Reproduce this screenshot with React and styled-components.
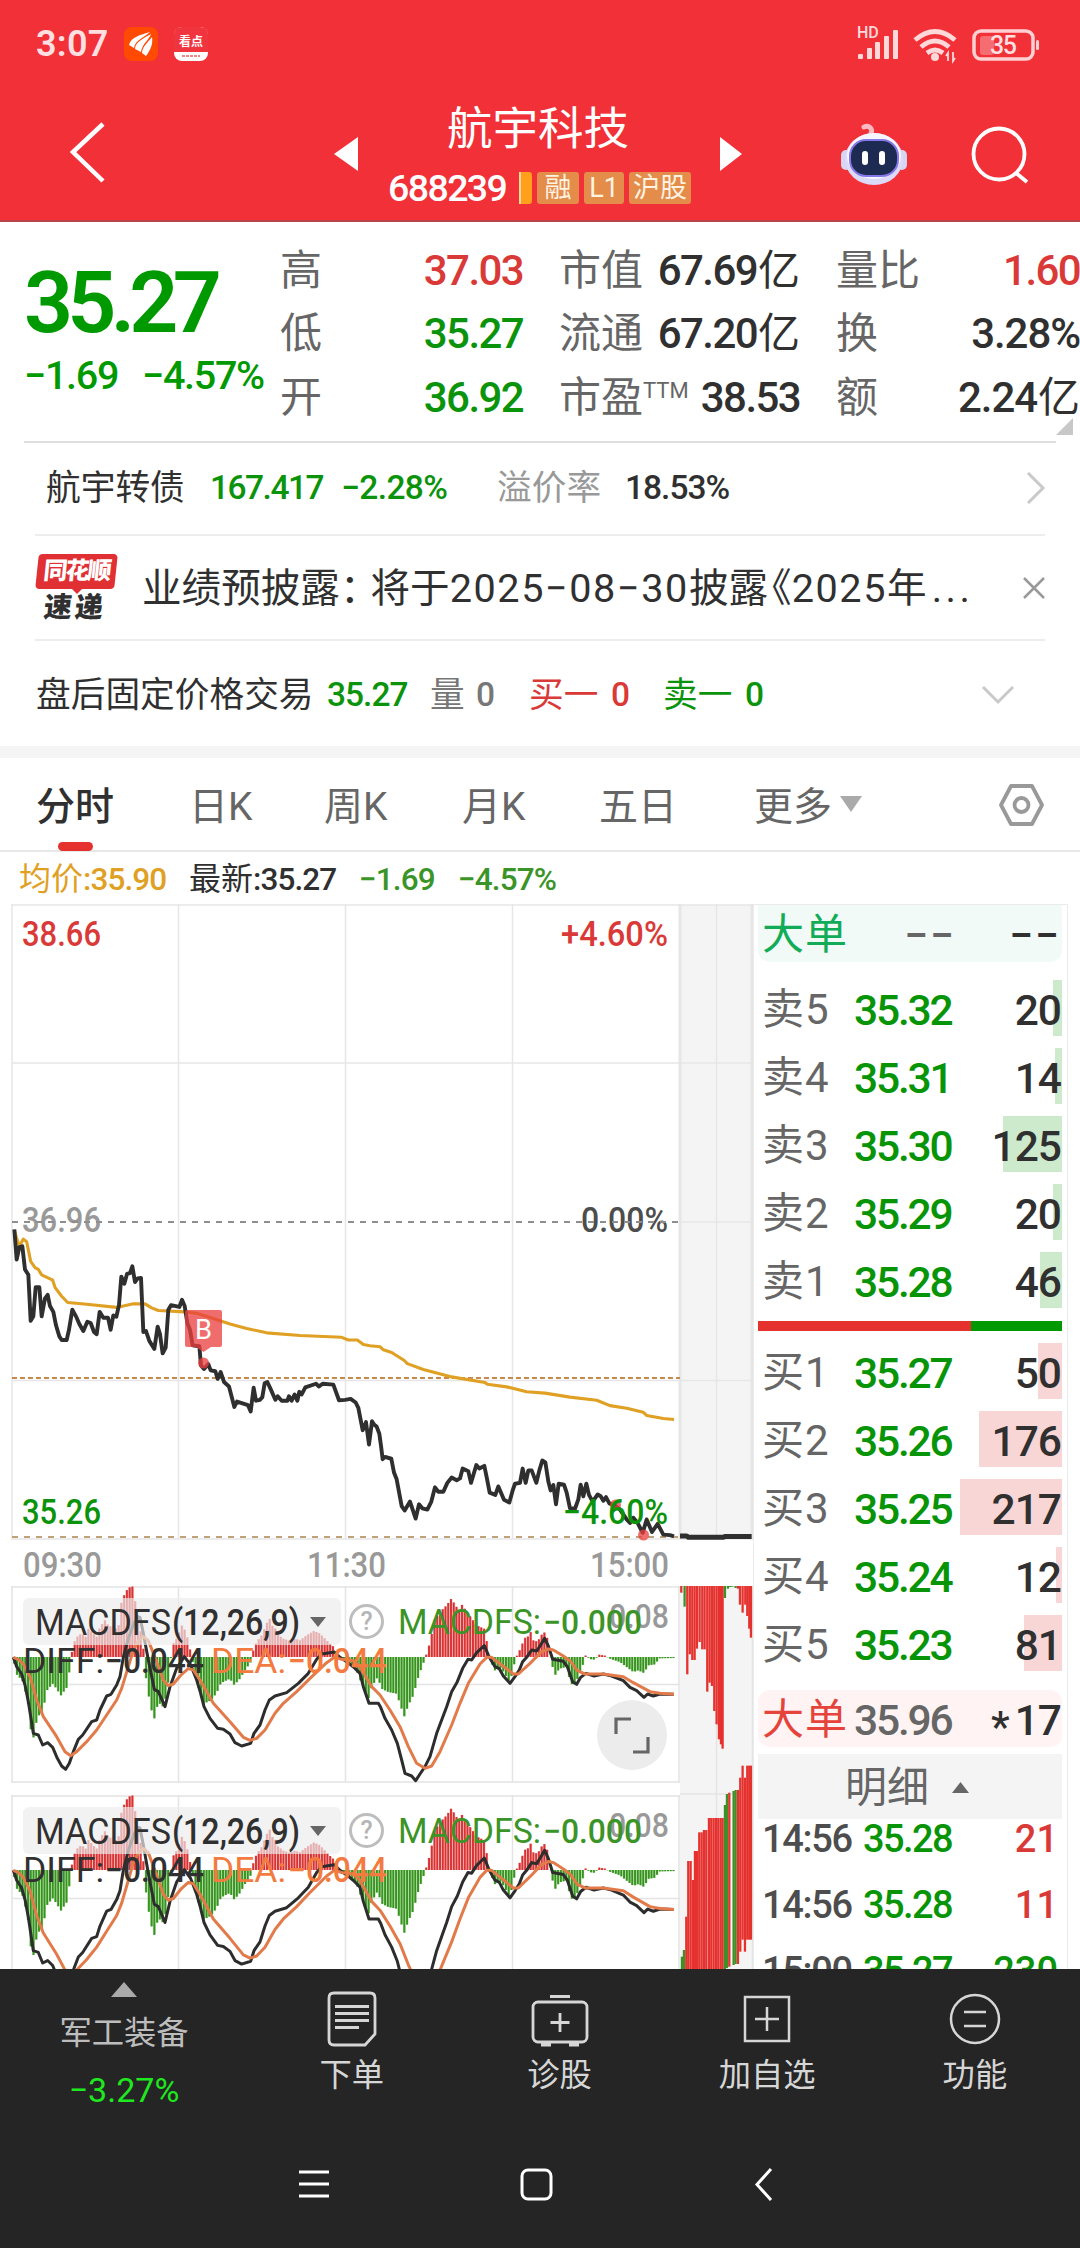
import React from "react";
import styled, { createGlobalStyle, css } from "styled-components";

const RED = "#d93a38";
const GREEN = "#0b930b";
const INK = "#303030";
const GRAY = "#666";
const LIGHT = "#999";

const GlobalStyle = createGlobalStyle`
	* { box-sizing: border-box; }
	body {
		margin: 0;
		background: #fff;
		color: ${INK};
		font-family: Roboto, "Noto Sans CJK SC", sans-serif;
		font-weight: 400;
		line-height: 1.2;
		-webkit-font-smoothing: antialiased;
	}
	svg { display: block; flex: none; }
	svg text { font-family: Roboto, "Noto Sans CJK SC", sans-serif; }
`;

const Screen = styled.div`
	width: 1080px;
	height: 2248px;
	display: flex;
	flex-direction: column;
	overflow: hidden;
	white-space: nowrap;
`;

/* ---------- header ---------- */

const Header = styled.header`
	height: 222px;
	background: #f13038;
	border-bottom: 2px solid #b8444c;
	color: #fff;
`;

const StatusBar = styled.div`
	height: 88px;
	padding: 0 39px 1px 36px;
	display: flex;
	align-items: center;
`;

const Clock = styled.span`
	width: 87px;
	padding-top: 3px;
	font-size: 36px;
	font-weight: 600;
	letter-spacing: 0.3px;
	color: #ffdfe0;
`;

const StatusIcons = styled.div`
	margin-left: auto;
	display: flex;
	align-items: center;
`;

const NavBar = styled.div`
	height: 132px;
	display: flex;
	align-items: center;
`;

const NavLeft = styled.div`
	width: 358px;
	padding-left: 66px;
	display: flex;
	justify-content: space-between;
	align-items: center;
`;

const NavTitle = styled.div`
	width: 362px;
	height: 132px;
	padding-top: 14px;
	display: flex;
	flex-direction: column;
	align-items: center;
`;

const StockName = styled.div`
	height: 58px;
	line-height: 56px;
	font-size: 45.5px;
	padding-right: 2px;
`;

const CodeLine = styled.div`
	display: flex;
	align-items: center;
	width: 302px;
	height: 56px;
`;

const Code = styled.span`
	width: 131px;
	flex: none;
	font-size: 37.5px;
	font-weight: 500;
	letter-spacing: -1.6px;
`;

const Tag = styled.span`
	height: 32px;
	width: ${p => p.$w}px;
	margin-right: 5px;
	flex: none;
	border-radius: 3px;
	background: #e48c4a;
	color: #fff3e2;
	font-size: 27px;
	line-height: 32px;
	text-align: center;
`;

const TagSliver = styled.span`
	height: 32px;
	width: 13px;
	margin-right: 5px;
	flex: none;
	border-radius: 0 3px 3px 0;
	background: linear-gradient(90deg, #ffd9a0 0 2px, #ff9f1c 2px);
`;

const NavRight = styled.div`
	display: flex;
	align-items: center;
	width: 359px;
`;

/* ---------- quote block ---------- */

const Quote = styled.section`
	height: 219px;
	display: flex;
	position: relative;
`;

const PriceBlock = styled.div`
	width: 280px;
	padding: 31px 0 0 24px;
	color: #009a00;
`;

const BigPrice = styled.div`
	height: 98px;
	line-height: 100px;
	font-size: 86px;
	font-weight: 600;
	letter-spacing: -5.8px;
`;

const Change = styled.div`
	height: 50px;
	line-height: 50px;
	font-size: 39.5px;
	font-weight: 500;
	letter-spacing: -1.3px;
	display: flex;
	span:first-child { width: 118px; }
`;

const StatColumn = styled.div`
	width: ${p => p.$w}px;
	margin-right: ${p => p.$gap}px;
	padding-top: 17px;
`;

const Stat = styled.div`
	height: 63.5px;
	display: flex;
	justify-content: space-between;
	align-items: center;
	font-size: 42px;
	color: ${GRAY};
	sup { font-size: 22px; line-height: 0; vertical-align: 14px; }
`;

const StatValue = styled.span`
	font-weight: 500;
	letter-spacing: ${p => (p.$tight ? -1.1 : -1.6)}px;
	color: ${p => p.$color || INK};
	i { font-style: normal; font-weight: 400; letter-spacing: 0; margin-left: 1px; }
`;

const Corner = styled.div`
	position: absolute;
	right: 7px;
	bottom: 6px;
	border-left: 17px solid transparent;
	border-bottom: 17px solid #c8c8c8;
`;

const Rule = styled.div`
	height: 2px;
	margin: 0 ${p => p.$m}px;
	background: ${p => p.$color || "#ededed"};
	flex: none;
`;

const InfoRow = styled.div`
	height: ${p => p.$h}px;
	padding: ${p => p.$pt || 0}px 34px 0 ${p => p.$pl}px;
	display: flex;
	align-items: center;
	font-size: 34.7px;
`;

const InfoCell = styled.span`
	width: ${p => p.$w}px;
	color: ${p => p.$color || INK};
	${p =>
		p.$num &&
		css`
			font-size: 33.5px;
			font-weight: 500;
			letter-spacing: ${p.$ls || -1}px;
		`}
`;

const NewsLogo = styled.div`
	position: relative;
	width: 106px;
	height: 76px;
	padding-top: 4px;
	font-weight: 900;
	font-size: 24px;
	div {
		width: 79px;
		height: 35px;
		line-height: 35px;
		margin-left: 1px;
		border-radius: 4px;
		background: #e03034;
		color: #fff;
		text-align: center;
		letter-spacing: -2px;
		transform: skewX(-6deg);
	}
	&::after {
		content: "";
		position: absolute;
		left: 35px;
		top: 38px;
		border: 6px solid transparent;
		border-top-color: #e03034;
	}
	p {
		margin: 2px 0 0 8px;
		line-height: 34px;
		font-size: 28px;
		letter-spacing: 3px;
		transform: skewX(-6deg);
	}
`;

const NewsText = styled.span`
	width: 874px;
	padding-top: 3px;
	font-size: 39.6px;
	b { font-weight: 400; letter-spacing: 1.6px; }
`;

/* full-width punctuation set to roughly half its advance */
const Colon = styled.span`
	letter-spacing: -9px;
`;

const OpenQuote = styled.span`
	margin-left: -16px;
`;

const Dots = styled.span`
	margin-left: 5px;
	letter-spacing: 3.5px;
`;

const Push = styled.span`
	margin-left: auto;
	margin-right: ${p => p.$mr || 0}px;
`;

const Band = styled.div`
	height: 12px;
	background: #f4f4f4;
	flex: none;
`;

/* ---------- tabs ---------- */

const Tabs = styled.nav`
	height: 94px;
	padding: 0 36px;
	display: flex;
	align-items: center;
	border-bottom: 2px solid #e8e8e8;
`;

const Tab = styled.div`
	position: relative;
	width: ${p => p.$w}px;
	font-size: 39px;
	line-height: 98px;
	height: 92px;
	color: ${p => (p.$active ? INK : GRAY)};
	font-weight: ${p => (p.$active ? 500 : 400)};
	${p =>
		p.$active &&
		css`
			&::after {
				content: "";
				position: absolute;
				left: 22px;
				bottom: -1px;
				width: 35px;
				height: 9px;
				border-radius: 5px;
				background: #e5322f;
			}
		`}
`;

const Legend = styled.div`
	height: 52px;
	padding: 3px 0 0 19px;
	display: flex;
	align-items: center;
	font-size: 32px;
`;

const LegendItem = styled.span`
	width: ${p => p.$w}px;
	color: ${p => p.$color || INK};
	b { font-weight: 500; font-size: 31.5px; letter-spacing: -0.9px; }
`;

/* ---------- body ---------- */

const Body = styled.main`
	height: 1065px;
	display: flex;
	overflow: hidden;
`;

const Charts = styled.div`
	width: 753px;
	flex: none;
`;

const Panel = styled.div`
	position: relative;
	height: ${p => p.$h}px;
	overflow: hidden;
`;

const PanelHead = styled.div`
	position: absolute;
	left: 23px;
	top: 12px;
	width: 653px;
	height: 47px;
	display: flex;
	align-items: center;
`;

const PanelText = styled.svg`
	position: absolute;
	left: 0;
	top: 0;
`;

const IndicatorPill = styled.div`
	width: 318px;
	height: 47px;
	border-radius: 6px;
	background: rgba(236, 236, 236, 0.68);
`;

const Help = styled.div`
	width: 35px;
	height: 35px;
	margin-left: 8px;
	border: 3px solid #bdbdbd;
	border-radius: 50%;
	color: #b5b5b5;
	font-size: 25px;
	font-weight: 500;
	line-height: 29px;
	text-align: center;
`;

const Expand = styled.div`
	position: absolute;
	left: 597px;
	top: 114px;
	width: 70px;
	height: 70px;
	border-radius: 50%;
	background: #ececec;
`;

const Book = styled.aside`
	width: 315px;
	border: 1px solid #ebebeb;
	border-width: 1px 1px 0 1px;
	padding: 0 5px 0 4px;
`;

const BigOrder = styled.div`
	height: 57px;
	margin-top: ${p => p.$mt || 0}px;
	padding: 3px 1px 0 4px;
	border-radius: ${p => (p.$buy ? "12px" : "0 0 12px 12px")};
	background: ${p => (p.$buy ? "#fff4f3" : "#f1faf6")};
	display: flex;
	align-items: center;
`;

const OrderRow = styled.div`
	height: 56px;
	margin-top: ${p => p.$mt}px;
	padding: 5px 1px 0 4px;
	display: flex;
	align-items: center;
	background: linear-gradient(${p => p.$bar}, ${p => p.$bar}) right / ${p => p.$w}px 100% no-repeat;
`;

const OrderLabel = styled.span`
	width: 92px;
	font-size: 42px;
	letter-spacing: 1px;
	color: ${p => p.$color || GRAY};
	white-space: nowrap;
`;

const OrderPrice = styled.span`
	width: 102px;
	font-size: 42.5px;
	font-weight: 500;
	letter-spacing: ${p => (p.$dash ? 2 : -2.2)}px;
	color: ${p => p.$color || "#079407"};
	text-align: ${p => (p.$dash ? "right" : "left")};
`;

const OrderVolume = styled.span`
	margin-left: auto;
	font-size: 42.5px;
	font-weight: 500;
	letter-spacing: ${p => (p.$dash ? 2 : -1)}px;
	color: ${INK};
	i { font-style: normal; font-size: 42px; line-height: 0; vertical-align: -6px; margin-right: 6px; }
`;

const Strength = styled.div`
	height: 10px;
	margin: 13px 0 0;
	background: linear-gradient(90deg, #e5322f 0 213px, #009a00 213px);
`;

const DetailHead = styled.div`
	height: 65px;
	margin-top: 7px;
	padding: 3px 0 0 87px;
	display: flex;
	align-items: center;
	background: #f4f4f4;
	color: ${GRAY};
	font-size: 42px;
`;

const Tick = styled.div`
	height: 66px;
	padding: 0 4px 0 4px;
	margin-top: ${p => p.$mt || 0}px;
	display: flex;
	align-items: center;
	font-size: 38px;
	font-weight: 500;
	letter-spacing: -1.6px;
	span:nth-child(1) { width: 101px; color: #4d4d4d; letter-spacing: -1.3px; }
	span:nth-child(2) { color: #079407; }
	span:nth-child(3) { margin-left: auto; color: ${p => p.$color || RED}; letter-spacing: 0; }
`;

/* ---------- footer ---------- */

const Footer = styled.footer`
	height: 279px;
	background: #252525;
	color: #d6d6d6;
`;

const Actions = styled.div`
	height: 150px;
	display: flex;
`;

const Sector = styled.div`
	width: 248px;
	padding-top: 13px;
	display: flex;
	flex-direction: column;
	align-items: center;
	font-size: 32.3px;
	color: #bdbdbd;
	span { line-height: 48px; margin-top: 12px; }
	b { font-weight: 400; font-size: 34px; color: #1fe81f; line-height: 48px; margin-top: 9px; }
`;

const Action = styled.div`
	width: 207.7px;
	padding-top: 20px;
	display: flex;
	flex-direction: column;
	align-items: center;
	font-size: 32.3px;
	line-height: 48px;
	span { margin-top: 2px; }
`;

const SystemBar = styled.div`
	height: 129px;
	display: flex;
	align-items: center;
	padding: 0 0 0 298px;
`;

/* ---------- data ---------- */

const price =
	"43,760 50,828 58,800 67,798 75,850 85,862 92,965 100,955 107,890 118,890 125,955 135,915 143,907 150,932 160,945 168,975 178,1000 185,1008 200,1008 207,985 217,940 228,955 238,972 250,988 262,967 272,970 282,990 290,995 299,945 310,958 324,958 332,985 340,953 349,956 357,930 364,866 373,882 381,860 390,858 397,843 405,878 413,870 423,869 430,990 438,988 448,1010 463,1028 473,978 480,995 488,1038 497,1025 505,940 513,930 538,934 546,918 554,932 562,970 570,985 578,1020 598,1022 603,1065 612,1073 625,1062 632,1076 646,1078 653,1095 662,1080 672,1102 687,1112 703,1158 711,1146 744,1154 752,1168 761,1115 768,1144 780,1142 787,1136 794,1105 802,1102 812,1118 826,1142 833,1134 845,1144 862,1144 867,1134 875,1144 884,1130 892,1144 898,1124 905,1130 916,1114 948,1106 957,1112 968,1106 1000,1108 1017,1143 1035,1142 1052,1140 1067,1148 1075,1160 1088,1210 1098,1192 1107,1242 1116,1190 1123,1198 1130,1202 1138,1218 1143,1245 1148,1275 1155,1270 1174,1274 1182,1305 1190,1320 1205,1380 1214,1390 1230,1370 1247,1408 1257,1376 1267,1385 1282,1388 1294,1370 1305,1338 1315,1348 1330,1348 1342,1328 1355,1316 1370,1322 1380,1318 1388,1296 1405,1302 1413,1328 1429,1288 1438,1296 1453,1290 1460,1315 1469,1350 1486,1355 1495,1336 1503,1350 1512,1366 1528,1372 1538,1345 1545,1330 1560,1328 1568,1296 1577,1328 1585,1300 1595,1300 1609,1328 1618,1300 1627,1278 1636,1282 1645,1325 1652,1345 1660,1333 1668,1376 1676,1330 1692,1332 1700,1350 1710,1385 1725,1386 1735,1365 1742,1332 1750,1358 1759,1330 1767,1355 1778,1370 1793,1354 1802,1358 1810,1368 1818,1360 1828,1374 1847,1380 1860,1388 1880,1410 1890,1418 1900,1406 1913,1418 1928,1440 1940,1410 1956,1438 1973,1420 1990,1444 2010,1445 2022,1448";

const average =
	"43,762 50,780 58,798 70,782 80,788 92,832 105,846 115,850 125,862 158,874 165,890 185,910 203,924 260,928 350,935 400,927 435,927 455,936 475,942 555,945 590,948 640,960 690,972 740,982 800,992 900,998 1025,1002 1045,1008 1072,1008 1090,1018 1110,1021 1140,1023 1150,1030 1175,1036 1213,1054 1222,1061 1270,1074 1350,1090 1455,1103 1462,1107 1520,1113 1580,1124 1635,1127 1710,1136 1790,1143 1830,1155 1880,1161 1930,1170 1940,1177 1990,1184 2022,1186";

const diff =
	"40,262 50,290 65,312 75,345 85,395 100,490 115,495 128,525 143,518 158,532 172,565 185,588 197,598 208,580 220,545 235,508 248,495 275,455 290,450 300,420 320,378 333,373 350,345 360,320 370,262 385,205 400,165 412,140 420,142 430,190 445,270 463,358 475,365 495,410 510,350 530,295 553,260 572,285 590,330 602,370 612,410 630,445 653,475 670,478 690,492 705,518 725,528 752,520 762,490 780,465 795,420 808,390 825,378 860,368 895,340 925,310 950,268 965,252 1003,246 1020,262 1040,275 1065,295 1080,310 1090,350 1107,400 1135,400 1142,412 1155,445 1175,480 1192,520 1205,570 1215,610 1235,618 1247,632 1260,612 1275,590 1290,560 1310,490 1325,450 1340,410 1355,365 1372,335 1388,295 1404,268 1415,270 1430,248 1453,227 1468,262 1485,290 1498,296 1510,318 1530,340 1545,320 1558,300 1568,275 1580,262 1595,240 1610,243 1622,225 1634,205 1645,228 1658,268 1690,274 1702,290 1718,335 1730,343 1742,322 1758,310 1782,318 1810,312 1835,318 1870,332 1890,352 1910,362 1932,382 1943,372 1960,378 1980,372 2022,373";

const dea =
	"40,262 55,268 70,282 90,320 110,390 130,440 170,500 195,545 212,557 230,545 260,515 290,480 320,435 350,390 365,355 385,290 400,240 415,212 430,200 445,212 470,275 490,330 505,347 520,342 545,313 565,296 580,300 600,330 640,400 690,455 730,502 750,511 770,505 795,480 825,430 850,400 890,365 930,325 980,278 1003,262 1025,268 1060,272 1080,290 1100,325 1115,350 1140,375 1170,420 1200,470 1225,530 1250,580 1275,595 1295,588 1320,545 1355,465 1380,400 1405,340 1440,282 1460,262 1475,262 1505,285 1540,312 1555,312 1590,280 1625,245 1645,237 1660,240 1690,258 1710,272 1732,302 1755,312 1810,312 1870,320 1900,338 1950,365 1980,370 2022,373";

// [x, height], positive values hang below the zero line
const histogram = [
	[43, 20], [48, 50], [67, 70], [75, 100], [83, 130], [92, 215], [100, 245], [108, 200], [117, 175], [125, 170], [133, 140],
	[141, 100], [158, 80], [166, 90], [183, 115], [200, 92], [208, 45], [214, 5], [216, -15], [225, -50], [235, -65], [245, -70],
	[258, -60], [265, -85], [275, -75], [290, -60], [300, -90], [315, -110], [328, -90], [340, -95], [352, -80], [360, -110],
	[365, -170], [375, -190], [385, -208], [400, -212], [405, -170], [412, -135], [420, -90], [431, -20], [434, 10], [438, 60],
	[447, 120], [455, 160], [463, 185], [471, 150], [480, 140], [490, 150], [500, 110], [508, 50], [513, 0], [520, -40],
	[530, -55], [540, -80], [546, -95], [555, -80], [565, -50], [574, -4], [580, 20], [592, 80], [600, 110], [611, 140], [633, 130],
	[650, 108], [663, 78], [690, 65], [703, 84], [720, 65], [735, 40], [756, 10], [760, -20], [770, -45], [785, -65], [800, -100],
	[808, -120], [815, -90], [822, -100], [830, -70], [850, -55], [870, -48], [885, -55], [900, -50], [920, -65], [942, -78],
	[960, -70], [975, -55], [990, -40], [1004, -28], [1008, 2], [1040, 15], [1070, 40], [1085, 80], [1107, 125], [1115, 90],
	[1133, 60], [1145, 95], [1165, 105], [1190, 110], [1205, 155], [1213, 178], [1225, 145], [1240, 115], [1255, 60], [1274, 8],
	[1280, -10], [1292, -50], [1303, -110], [1320, -135], [1340, -155], [1354, -175], [1370, -150], [1378, -140], [1387, -158],
	[1397, -140], [1412, -120], [1430, -95], [1452, -85], [1462, -40], [1468, 4], [1485, 40], [1503, 32], [1520, 60], [1530, 78],
	[1540, 30], [1548, 5], [1553, -10], [1565, -30], [1572, -60], [1580, -55], [1592, -75], [1602, -45], [1615, -50], [1630, -75],
	[1640, -70], [1648, -6], [1652, 8], [1665, 55], [1678, 35], [1700, 30], [1710, 70], [1720, 90], [1735, 60], [1750, 20],
	[1758, -8], [1768, 6], [1785, 8], [1797, -7], [1815, -4], [1830, 5], [1860, 15], [1880, 30], [1900, 45], [1915, 40],
	[1932, 48], [1945, 25], [1965, 22], [1978, 4], [2024, 3],
];

function heightAt(x) {
	for (let i = 1; i < histogram.length; i++) {
		const [x0, h0] = histogram[i - 1];
		const [x1, h1] = histogram[i];
		if (x <= x1) return h0 + ((h1 - h0) * (x - x0)) / (x1 - x0);
	}
	return 3;
}

const minutes = Array.from({ length: 241 }, (_, i) => {
	const x = 43 + i * 8.24;
	return { x, h: heightAt(x) };
});

const R = "#e5322f";
const G = "#3f8f28";

// after-hours columns: [x, height, colour]
const hanging = [
	[934, 20, R], [944, 62, G], [952, 265, R], [959.5, 205, R], [967, 222, R], [974, 222, R], [981, 188, R], [989, 168, R],
	[997, 190, R], [1004, 190, R], [1012, 317, R], [1019, 290, R], [1026, 300, R], [1033, 375, R], [1040, 415, R], [1047, 460, R],
	[1053, 475, R], [1058, 488, R], [1065, 36, G], [1074, 8, G], [1081, 3, G], [1088, 2, G], [1097, 6, G], [1104, 8, R],
	[1110, 56, R], [1118, 80, R], [1126, 56, R], [1132, 90, R], [1138, 128, R], [1143, 155, R],
];

const rising = [
	[936, 1160, G], [942, 1140, G], [949, 1040, R], [955, 873, R], [962, 873, R], [969, 930, R], [975, 843, R], [981, 843, R],
	[988, 787, R], [995, 787, R], [1002, 780, R], [1009, 780, R], [1017, 744, R], [1024, 744, R], [1031, 744, R], [1038, 744, R],
	[1045, 744, R], [1052, 744, R], [1058, 744, R], [1065, 705, G], [1071, 672, G], [1078, 668, R], [1091, 663, G], [1097, 660, G],
	[1104, 660, R], [1111, 623, R], [1118, 587, R], [1125, 623, R], [1132, 587, R], [1138, 587, R], [1143, 587, R],
];

const sells = [
	["卖5", "35.32", 20],
	["卖4", "35.31", 14],
	["卖3", "35.30", 125],
	["卖2", "35.29", 20],
	["卖1", "35.28", 46],
];
const buys = [
	["买1", "35.27", 50],
	["买2", "35.26", 176],
	["买3", "35.25", 217],
	["买4", "35.24", 12],
	["买5", "35.23", 81],
];

const barWidth = volume => Math.round((volume * 102) / 217);

/* ---------- chart parts ---------- */

function Label({ x, y, w, size = 35, color, weight = 500, children }) {
	return (
		<text x={x} y={y} fontSize={size} fill={color} fontWeight={weight} textLength={w} lengthAdjust="spacingAndGlyphs">
			{children}
		</text>
	);
}

function Line({ points, color, width = 3 }) {
	return <polyline points={points} fill="none" stroke={color} strokeWidth={width} strokeLinejoin="round" vectorEffect="non-scaling-stroke" />;
}

function PriceChart() {
	return (
		<svg width="753" height="682">
			<rect x="680" y="1" width="72" height="634" fill="#f4f4f4" />
			<g stroke="#e6e6e6" strokeWidth="1.5">
				<path d="M11 1H753M12 159H753M680 318H753M12 476.5H753M11 635H753" />
				<path d="M12 0V635M178.5 0V635M345.5 0V635M512.5 0V635M716.5 0V635" />
				<path d="M680 0V635M752 0V635" strokeWidth="3" />
			</g>
			<Label x={22} y={42} w={79} color={RED}>38.66</Label>
			<Label x={561} y={42} w={107} color={RED}>+4.60%</Label>
			<Label x={22} y={328} w={79} color={LIGHT}>36.96</Label>
			<Label x={581} y={328} w={87} color="#4d4d4d">0.00%</Label>
			<Label x={22} y={620} w={79} color={GREEN}>35.26</Label>
			<path d="M12 318H680" stroke="#8e8e8e" strokeWidth="1.8" strokeDasharray="6 6" />
			<path d="M12 474H680" stroke="#c78a4e" strokeWidth="1.8" strokeDasharray="5 3" />
			<path d="M12 633H678" stroke="#bfa27a" strokeWidth="1.8" strokeDasharray="6 6" />
			<g transform="translate(0 -14) scale(0.33333 0.446429)">
				<Line points={average} color="#dfa024" width={3.1} />
				<Line points={price} color="#2f2f2f" width={3.9} />
				<Line points="2040,1447 2060,1447 2065,1450 2170,1450 2175,1448 2255,1448" color="#2f2f2f" width={5} />
			</g>
			<g fill="#ea3f3f" fillOpacity="0.76">
				<path d="M187 406H220Q222 406 222 408V441Q222 443 220 443H211L203.5 448 196 443H187Q185 443 185 441V408Q185 406 187 406Z" />
				<circle cx="203.5" cy="459" r="5.5" />
				<circle cx="615.5" cy="601" r="5.5" />
				<circle cx="643.5" cy="631" r="5.5" />
			</g>
			<Label x={195} y={435} w={17} size={27} color="#fff" weight={400}>B</Label>
			<Label x={563} y={620} w={105} color={GREEN}>−4.60%</Label>
			<Label x={23} y={673} w={79} color={LIGHT}>09:30</Label>
			<Label x={307} y={673} w={79} color={LIGHT}>11:30</Label>
			<Label x={590} y={673} w={79} color={LIGHT}>15:00</Label>
		</svg>
	);
}

function MacdPanel({ height, zero, scale, mid, last }) {
	const base = `translate(0 ${zero - 87 * scale}) scale(0.33333 ${scale / 3})`;
	const bottom = last ? height : 196;
	return (
		<Panel $h={height}>
			<svg width="753" height={height}>
				<rect x="680" y="0" width="73" height={height} fill="#f4f4f4" />
				<g stroke="#e4e4e4" strokeWidth="1.5">
					<path d={`M11 1H680M12 ${mid}H680`} />
					<path d={`M12 0V${bottom}M178.5 0V${bottom}M345.5 0V${bottom}M512.5 0V${bottom}M679 0V${bottom}`} />
					{!last && <path d="M11 196H680M680 208H753" />}
					<path d={`M716.5 0V${height}M752.5 0V${height}`} />
				</g>
				{(last ? rising : hanging).map(([x, v, color]) => (
					<rect
						key={x}
						x={(x - 3.6 + 1110) / 3}
						y={last ? (v - 675) / 3 : 0}
						width="2.3"
						height={last ? height : v / 3}
						fill={color}
					/>
				))}
				{/* the tallest columns run up past the panel edge */}
				{!last &&
					rising.filter(r => r[1] < 675).map(([x, v, color]) => (
						<rect key={x} x={(x - 3.6 + 1110) / 3} y={(v - 48) / 3} width="2.3" height="60" fill={color} />
					))}
				{minutes.map(({ x, h }) => (
					<g key={x} transform={`translate(${x / 3} ${zero})`}>
						<rect x="-1.4" width="2.75" y={Math.min(0, (h * scale) / 3)} height={Math.abs(h * scale) / 3} fill={h > 0 ? "#b4dda6" : "#f3b6b6"} />
						<rect x="-1" width="1.9" y={Math.min(0, (h * scale) / 3)} height={Math.abs(h * scale) / 3} fill={h > 0 ? "#37931f" : "#d93232"} />
					</g>
				))}
				<g transform={base}>
					<Line points={diff} color="#2d2d2d" width={3} />
					<Line points={dea} color="#e27a4a" width={3} />
				</g>
			</svg>
			<PanelHead>
				<IndicatorPill />
				<Help>?</Help>
			</PanelHead>
			<PanelText width="753" height={height}>
				<Label x={35} y={49} w={136} size={36} color={INK} weight={400}>MACDFS</Label>
				<Label x={172} y={49} w={128} size={36} color={INK}>(12,26,9)</Label>
				<path d="M310 31H326L318 41Z" fill="#666" />
				<Label x={609} y={42} w={60} size={34} color={LIGHT}>0.08</Label>
				<Label x={398} y={48} w={143} size={35} color="#3b9427" weight={400}>MACDFS:</Label>
				<Label x={543} y={48} w={99} size={34} color="#3b9427">−0.000</Label>
				<Label x={23} y={87} w={81} size={35} color={INK} weight={400}>DIFF:</Label>
				<Label x={105} y={87} w={99} size={35} color={INK}>−0.044</Label>
				<Label x={211} y={87} w={75} size={35} color="#f37b40" weight={400}>DEA:</Label>
				<Label x={288} y={87} w={99} size={35} color="#f37b40">−0.044</Label>
			</PanelText>
			{!last && (
				<Expand>
					<svg width="70" height="70" fill="none" stroke="#666" strokeWidth="3.2">
						<path d="M34 19H19V34M36 52H51V37" />
					</svg>
				</Expand>
			)}
		</Panel>
	);
}

function Robot() {
	return (
		<svg width="70" height="70" viewBox="0 0 70 70">
			<path d="M32 15C34 9 30 6 25 8" fill="none" stroke="#ffb9c0" strokeWidth="5" strokeLinecap="round" />
			<rect x="2" y="31" width="10" height="20" rx="5" fill="#d7d5f2" />
			<rect x="58" y="31" width="10" height="20" rx="5" fill="#d7d5f2" />
			<ellipse cx="35" cy="40" rx="29" ry="26" fill="#dcdaf8" />
			<ellipse cx="35" cy="37" rx="27" ry="23" fill="#f7f5ff" />
			<rect x="11" y="21" width="48" height="36" rx="16" fill="#1d2b52" stroke="#8577e8" strokeWidth="2" />
			<rect x="23" y="32" width="6" height="14" rx="3" fill="#fff" />
			<rect x="40" y="32" width="6" height="14" rx="3" fill="#fff" />
		</svg>
	);
}

function App() {
	return (
		<React.Fragment>
			<GlobalStyle />
			<Screen>
				<Header>
					<StatusBar>
						<Clock>3:07</Clock>
						<svg width="86" height="36" viewBox="0 0 86 36">
							<rect x="1" y="1" width="34" height="34" rx="8" fill="#ff4a04" />
							<path d="M6 19C8 11 17 9 27 6 22 11 12 14 11 22Z" fill="#fff" />
							<path d="M12 23C12 16 21 12 28 8 26 14 19 18 18 26Z" fill="#fff" />
							<path d="M19 27C19 21 25 16 29 11 30 18 28 23 23 30Z" fill="#fff" />
							<rect x="51" y="1" width="34" height="34" rx="8" fill="#fff" />
							<path d="M51 26V9Q51 1 59 1H77Q85 1 85 9V26Z" fill="#f0353f" />
							<text x="56" y="20" fontSize="12" fontWeight="700" fill="#fff">看点</text>
							<path d="M59 30H77" stroke="#e88" strokeWidth="2" strokeDasharray="3 1" />
						</svg>
						<StatusIcons>
							<svg width="184" height="40" viewBox="0 0 184 40">
								<text x="0" y="14" fontSize="16" fontWeight="500" fill="#ffd9da">HD</text>
								<g fill="#ffd9da">
									<rect x="1" y="30" width="5" height="5" rx="1" />
									<rect x="10" y="24" width="5" height="11" rx="1" />
									<rect x="18" y="18" width="5" height="17" rx="1" />
									<rect x="27" y="12" width="5" height="23" rx="1" />
									<rect x="36" y="6" width="5" height="29" rx="1" />
									<circle cx="78" cy="33" r="4" />
								</g>
								<g fill="none" stroke="#ffd9da" strokeWidth="4.8">
									<path d="M58 16Q78 -1 98 16" />
									<path d="M64 23Q78 11 92 23" />
									<path d="M70 29Q78 23 86 29" />
								</g>
								<path d="M91 37V29L89 32M96 28V37L98 34" fill="none" stroke="#ffd9da" strokeWidth="1.8" />
								<rect x="123" y="12" width="14" height="19" rx="3" fill="#f56c71" />
								<rect x="117" y="7" width="59" height="28" rx="7" fill="none" stroke="#ffd0d2" strokeWidth="3.5" />
								<rect x="179" y="16" width="3" height="10" rx="1.5" fill="#ffd0d2" />
								<text x="133" y="30" fontSize="25" fontWeight="500" fill="#ffdfe0" textLength="27">35</text>
							</svg>
						</StatusIcons>
					</StatusBar>
					<NavBar>
						<NavLeft>
							<svg width="44" height="64" fill="none" stroke="#fff" strokeWidth="4.5">
								<path d="M37 2L7 30 37 59" />
							</svg>
							<svg width="24" height="34"><path d="M24 0V34L0 17Z" fill="#fff" /></svg>
						</NavLeft>
						<NavTitle>
							<StockName>航宇科技</StockName>
							<CodeLine>
								<Code>688239</Code>
								<TagSliver />
								<Tag $w={42}>融</Tag>
								<Tag $w={40}>L1</Tag>
								<Tag $w={62}>沪股</Tag>
							</CodeLine>
						</NavTitle>
						<NavRight>
							<svg width="119" height="34"><path d="M0 0V34L22 17Z" fill="#fff" /></svg>
							<Robot />
							<svg width="130" height="64" fill="none" stroke="#fff" strokeWidth="3.8">
								<circle cx="90" cy="32" r="25.5" />
								<path d="M107 51L118 60" />
							</svg>
						</NavRight>
					</NavBar>
				</Header>

				<Quote>
					<PriceBlock>
						<BigPrice>35.27</BigPrice>
						<Change>
							<span>−1.69</span>
							<span>−4.57%</span>
						</Change>
					</PriceBlock>
					<StatColumn $w={243} $gap={36}>
						<Stat>高<StatValue $color={RED}>37.03</StatValue></Stat>
						<Stat>低<StatValue $color={GREEN}>35.27</StatValue></Stat>
						<Stat>开<StatValue $color={GREEN}>36.92</StatValue></Stat>
					</StatColumn>
					<StatColumn $w={241} $gap={36}>
						<Stat>市值<StatValue>67.69<i>亿</i></StatValue></Stat>
						<Stat>流通<StatValue>67.20<i>亿</i></StatValue></Stat>
						<Stat><span>市盈<sup>TTM</sup></span><StatValue>38.53</StatValue></Stat>
					</StatColumn>
					<StatColumn $w={244} $gap={0}>
						<Stat>量比<StatValue $color={RED}>1.60</StatValue></Stat>
						<Stat>换<StatValue $tight>3.28%</StatValue></Stat>
						<Stat>额<StatValue $tight>2.24<i>亿</i></StatValue></Stat>
					</StatColumn>
					<Corner />
				</Quote>
				<Rule $m={24} $color="#dedede" />

				<InfoRow $h={91} $pl={46}>
					<InfoCell $w={164}>航宇转债</InfoCell>
					<InfoCell $w={131} $num $ls={-1.5} $color={GREEN}>167.417</InfoCell>
					<InfoCell $w={156} $num $ls={-0.6} $color={GREEN}>−2.28%</InfoCell>
					<InfoCell $w={128} $color={LIGHT}>溢价率</InfoCell>
					<InfoCell $w={110} $num>18.53%</InfoCell>
					<Push>
						<svg width="20" height="34" fill="none" stroke="#c9c9c9" strokeWidth="3">
							<path d="M2 1L17 16 2 31" />
						</svg>
					</Push>
				</InfoRow>
				<Rule $m={35} />
				<InfoRow $h={103} $pl={36}>
					<NewsLogo>
						<div>同花顺</div>
						<p>速递</p>
					</NewsLogo>
					<NewsText>
						业绩预披露<Colon>：</Colon>将于<b>2025−08−30</b>披露<OpenQuote>《</OpenQuote><b>2025</b>年<Dots>...</Dots>
					</NewsText>
					<Push>
						<svg width="24" height="24" fill="none" stroke="#999" strokeWidth="2.5">
							<path d="M2 2L22 22M22 2L2 22" />
						</svg>
					</Push>
				</InfoRow>
				<Rule $m={35} />
				<InfoRow $h={105} $pl={36} $pt={4}>
					<InfoCell $w={291}>盘后固定价格交易</InfoCell>
					<InfoCell $w={103} $num $color={GREEN}>35.27</InfoCell>
					<InfoCell $w={46} $color="#777">量</InfoCell>
					<InfoCell $w={53} $num $color="#777">0</InfoCell>
					<InfoCell $w={82} $color={RED}>买一</InfoCell>
					<InfoCell $w={52} $num $color={RED}>0</InfoCell>
					<InfoCell $w={82} $color={GREEN}>卖一</InfoCell>
					<InfoCell $w={30} $num $color={GREEN}>0</InfoCell>
					<Push $mr={31}>
						<svg width="34" height="22" fill="none" stroke="#c9c9c9" strokeWidth="3">
							<path d="M2 2L17 17 32 2" />
						</svg>
					</Push>
				</InfoRow>
				<Band />

				<Tabs>
					<Tab $w={153} $active>分时</Tab>
					<Tab $w={135}>日K</Tab>
					<Tab $w={138}>周K</Tab>
					<Tab $w={137}>月K</Tab>
					<Tab $w={155}>五日</Tab>
					<Tab $w={86}>更多</Tab>
					<svg width="22" height="18"><path d="M0 1H22L11 17Z" fill="#aaa" /></svg>
					<Push>
						<svg width="45" height="46" fill="none" stroke="#999" strokeWidth="3.8">
							<path d="M12 5H33L43 24 33 43H12L2 24Z" strokeLinejoin="round" />
							<circle cx="22.5" cy="24" r="7" />
						</svg>
					</Push>
				</Tabs>
				<Legend>
					<LegendItem $w={170} $color="#dfa024">均价<b>:35.90</b></LegendItem>
					<LegendItem $w={170}>最新<b>:35.27</b></LegendItem>
					<LegendItem $w={99} $color="#3a9427"><b>−1.69</b></LegendItem>
					<LegendItem $w={110} $color="#3a9427"><b>−4.57%</b></LegendItem>
				</Legend>

				<Body>
					<Charts>
						<PriceChart />
						<MacdPanel height={209} zero={71} scale={1} mid={98.5} />
						<MacdPanel height={174} zero={75} scale={1.057} mid={103.5} last />
					</Charts>
					<Book>
						<BigOrder>
							<OrderLabel $color="#12ac58">大单</OrderLabel>
							<OrderPrice $dash $color={GRAY}>−−</OrderPrice>
							<OrderVolume $dash>−−</OrderVolume>
						</BigOrder>
						{sells.map(([label, value, volume], i) => (
							<OrderRow key={label} $mt={i ? 12 : 18} $w={barWidth(volume)} $bar="#cdeacd">
								<OrderLabel>{label}</OrderLabel>
								<OrderPrice>{value}</OrderPrice>
								<OrderVolume>{volume}</OrderVolume>
							</OrderRow>
						))}
						<Strength />
						{buys.map(([label, value, volume]) => (
							<OrderRow key={label} $mt={12} $w={barWidth(volume)} $bar="#f9d6d6">
								<OrderLabel>{label}</OrderLabel>
								<OrderPrice>{value}</OrderPrice>
								<OrderVolume>{volume}</OrderVolume>
							</OrderRow>
						))}
						<BigOrder $buy $mt={19}>
							<OrderLabel $color="#e5443c">大单</OrderLabel>
							<OrderPrice $color={GRAY}>35.96</OrderPrice>
							<OrderVolume><i>*</i>17</OrderVolume>
						</BigOrder>
						<DetailHead>
							明细
							<svg width="40" height="12"><path d="M23 11L31.5 0 40 11Z" fill="#666" /></svg>
						</DetailHead>
						<Tick $mt={-12}>
							<span>14:56</span>
							<span>35.28</span>
							<span>21</span>
						</Tick>
						<Tick>
							<span>14:56</span>
							<span>35.28</span>
							<span>11</span>
						</Tick>
						<Tick $color={GREEN}>
							<span>15:00</span>
							<span>35.27</span>
							<span>230</span>
						</Tick>
					</Book>
				</Body>

				<Footer>
					<Actions>
						<Sector>
							<svg width="26" height="15"><path d="M0 15L13 0 26 15Z" fill="#aaa" /></svg>
							<span>军工装备</span>
							<b>−3.27%</b>
						</Sector>
						<Action>
							<svg width="60" height="60" fill="none" stroke="#d6d6d6" strokeWidth="2.8">
								<path d="M12 4H48Q53 4 53 9V45L43 56H12Q7 56 7 51V9Q7 4 12 4Z" />
								<path d="M13 17.5H47M13 24.5H47M13 31.5H47M13 38.5H37" />
							</svg>
							<span>下单</span>
						</Action>
						<Action>
							<svg width="60" height="60" fill="none" stroke="#d6d6d6" strokeWidth="2.8">
								<rect x="3" y="13" width="54" height="40" rx="5" />
								<path d="M20 7.5H40M30 24V43M20.5 33.5H39.5" />
								<path d="M11 55.5H21M39 55.5H49" strokeWidth="4" />
							</svg>
							<span>诊股</span>
						</Action>
						<Action>
							<svg width="60" height="60" fill="none" stroke="#d6d6d6" strokeWidth="2.5">
								<rect x="8" y="8" width="44" height="44" />
								<path d="M30 18V42M18 30H42" />
							</svg>
							<span>加自选</span>
						</Action>
						<Action>
							<svg width="60" height="60" fill="none" stroke="#d6d6d6" strokeWidth="2.5">
								<circle cx="30" cy="30" r="24" />
								<path d="M19 23H41M19 37H41" />
							</svg>
							<span>功能</span>
						</Action>
					</Actions>
					<SystemBar>
						<svg width="480" height="40" fill="none" stroke="#fff" strokeWidth="3">
							<path d="M1 8H31M1 20H31M1 32H31" />
							<rect x="224" y="6" width="29" height="29" rx="6" />
							<path d="M473 5L459 20.5 473 36" />
						</svg>
					</SystemBar>
				</Footer>
			</Screen>
		</React.Fragment>
	);
}

export default App;
